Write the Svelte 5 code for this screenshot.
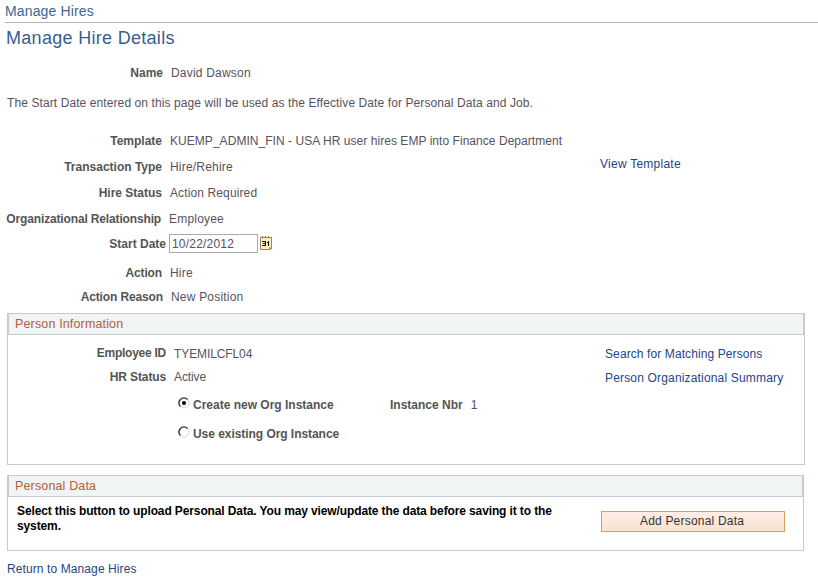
<script lang="ts">
  let startDate = $state('10/22/2012');
  let orgInstance = $state('new');

  const details = [
    { key: 'template', label: 'Template', value: 'KUEMP_ADMIN_FIN - USA HR user hires EMP into Finance Department' },
    { key: 'type', label: 'Transaction Type', value: 'Hire/Rehire' },
    { key: 'status', label: 'Hire Status', value: 'Action Required' },
    { key: 'relation', label: 'Organizational Relationship', value: 'Employee' }
  ];
</script>

{#snippet radioMark(checked: boolean)}
  <svg width="12" height="12" viewBox="0 0 12 12" aria-hidden="true">
    <circle cx="6" cy="6" r="5" fill="#fff" stroke="#d8d8d8" />
    <path d="M2.4 9.6A5 5 0 0 1 9.6 2.4" fill="none" stroke="#333" stroke-width="1.4" />
    {#if checked}<circle cx="6" cy="6" r="2.1" />{/if}
  </svg>
{/snippet}

<main class="page">
  <header class="crumb">Manage Hires</header>
  <h1>Manage Hire Details</h1>

  <div class="row name">
    <span class="label">Name</span>
    <span class="value">David Dawson</span>
  </div>

  <p class="intro">The Start Date entered on this page will be used as the Effective Date for Personal Data and Job.</p>

  <div class="details">
    <div>
      {#each details as item}
        <div class="row {item.key}">
          <span class="label">{item.label}</span>
          <span class="value">{item.value}</span>
        </div>
      {/each}
    </div>
    <a class="view" href="#template">View Template</a>
  </div>

  <div class="row start">
    <label class="label" for="start-date">Start Date</label>
    <input id="start-date" class="date" type="text" bind:value={startDate} />
    <svg class="calendar" width="12" height="14" viewBox="0 0 12 14" shape-rendering="crispEdges" aria-hidden="true">
      <path d="M0 1h12v11l-2 2H0z" fill="#a58a55" />
      <path d="M1 2h10v9H9v2H1z" fill="#fdebc4" />
      <path d="M9 11h2l-2 2z" fill="#d9bd83" />
      <path d="M2 0h1v2H2zM5 0h1v2H5zM8 0h1v2H8z" fill="#8e7440" />
      <path d="M2 5h4v5H2V9h3V8H3V7h2V6H2zM8 5h1v5H8V7H7V6h1z" fill="#111" />
    </svg>
  </div>

  <div class="row action">
    <span class="label">Action</span>
    <span class="value">Hire</span>
  </div>
  <div class="row reason">
    <span class="label">Action Reason</span>
    <span class="value">New Position</span>
  </div>

  <section class="box person">
    <h2>Person Information</h2>
    <div class="person-body">
      <div>
        <div class="row employee">
          <span class="label">Employee ID</span>
          <span class="value">TYEMILCFL04</span>
        </div>
        <div class="row hr">
          <span class="label">HR Status</span>
          <span class="value">Active</span>
        </div>
      </div>
      <nav class="links">
        <a class="search" href="#search">Search for Matching Persons</a>
        <a class="summary" href="#summary">Person Organizational Summary</a>
      </nav>
    </div>
    <div class="choice">
      <label class="radio create">
        <input type="radio" bind:group={orgInstance} value="new" />
        {@render radioMark(orgInstance === 'new')}
        <span>Create new Org Instance</span>
      </label>
      <span class="label nbr">Instance Nbr</span>
      <span class="value">1</span>
    </div>
    <div class="choice">
      <label class="radio existing">
        <input type="radio" bind:group={orgInstance} value="existing" />
        {@render radioMark(orgInstance === 'existing')}
        <span>Use existing Org Instance</span>
      </label>
    </div>
  </section>

  <section class="box personal">
    <h2>Personal Data</h2>
    <div class="personal-body">
      <p>Select this button to upload Personal Data. You may view/update the data before saving it to the<br />system.</p>
      <button type="button">Add Personal Data</button>
    </div>
  </section>

  <a class="return" href="#hires">Return to Manage Hires</a>
</main>

<style>
  :global(body) {
    background: #fff;
  }

  .page {
    box-sizing: border-box;
    width: 818px;
    height: 579px;
    overflow: hidden;
    font: 12px/14px 'Liberation Sans', Arial, sans-serif;
    color: #57525c;
    white-space: nowrap;
  }

  .crumb {
    height: 22px;
    margin-left: 5px;
    border-bottom: 1px solid #b5b5b5;
    font-size: 14px;
    line-height: 22px;
    letter-spacing: 0.15px;
    color: #426597;
  }

  h1 {
    margin: 0 0 0 6px;
    height: 30px;
    font-weight: 400;
    font-size: 18px;
    line-height: 30px;
    letter-spacing: 0.3px;
    color: #365f91;
  }

  h2 {
    box-sizing: border-box;
    margin: 0;
    height: 21px;
    padding-left: 6px;
    border: solid #c5cad0;
    border-width: 0 1px 1px;
    background: #f0f4f5;
    font-weight: 400;
    font-size: 12.5px;
    line-height: 20px;
    letter-spacing: 0.15px;
    color: #b25f38;
  }

  a {
    color: #1f4488;
    text-decoration: none;
    letter-spacing: 0.1px;
  }

  .row {
    display: flex;
    align-items: center;
    height: 26px;
  }

  .label {
    width: 162px;
    margin-right: 8px;
    text-align: right;
    font-weight: 700;
    color: #545454;
  }

  .value {
    letter-spacing: 0.2px;
  }

  .name {
    height: 40px;
  }

  .name .label,
  .reason .label {
    width: 163px;
  }

  .template .value {
    letter-spacing: 0.045px;
  }

  .status .value {
    letter-spacing: 0.12px;
  }

  .relation .label {
    width: 161px;
    letter-spacing: -0.15px;
  }

  .intro {
    margin: 0 0 0 7px;
    height: 35px;
    line-height: 20px;
    letter-spacing: 0.095px;
  }

  .details {
    display: grid;
    grid-template-columns: 600px auto;
    height: 104px;
  }

  .view {
    padding-top: 29px;
    letter-spacing: 0.25px;
  }

  .start {
    box-sizing: border-box;
    height: 27px;
    padding-bottom: 3px;
  }

  .start .label {
    width: 166px;
    margin-right: 3px;
  }

  .date {
    box-sizing: border-box;
    width: 89px;
    height: 19px;
    margin: -2px 2px 0 0;
    padding: 1px 2px 0;
    border: 1px solid #aaa;
    font: inherit;
    letter-spacing: 0.2px;
    color: inherit;
  }

  .calendar {
    margin-top: -2px;
  }

  .action {
    height: 27px;
  }

  .action .label,
  .reason .label,
  .hr .label {
    letter-spacing: -0.13px;
  }

  .reason {
    height: 22px;
    margin-bottom: 5px;
  }

  .box {
    box-sizing: border-box;
    margin-left: 7px;
    border: 1px solid #c5cad0;
  }

  .person {
    width: 798px;
    height: 152px;
  }

  .person-body {
    display: grid;
    grid-template-columns: 597px auto;
    padding-top: 6px;
    height: 49px;
  }

  .person-body .row {
    height: 24px;
  }

  .person-body .label {
    width: 158px;
  }

  .employee .label {
    letter-spacing: -0.25px;
  }

  .employee .value {
    padding-top: 1px;
  }

  .hr .label {
    padding-bottom: 1px;
  }

  .person-body .value {
    letter-spacing: -0.1px;
  }

  .links {
    display: flex;
    flex-direction: column;
    gap: 10px;
    padding-top: 6px;
  }

  .summary {
    letter-spacing: 0.17px;
  }

  .choice {
    display: flex;
    align-items: center;
    height: 29px;
    padding-left: 170px;
  }

  .radio {
    display: flex;
    align-items: center;
    width: 212px;
    font-weight: 700;
    color: #545454;
  }

  .radio svg {
    margin: -4px 3px 0 0;
  }

  .radio input {
    appearance: none;
    width: 0;
    height: 0;
    margin: 0;
  }

  .existing {
    letter-spacing: -0.05px;
  }

  .nbr {
    width: auto;
  }

  .personal {
    width: 797px;
    height: 76px;
    margin-top: 10px;
  }

  .personal-body {
    display: flex;
    justify-content: space-between;
    padding: 7px 18px 0 9px;
  }

  .personal-body p {
    margin: 0;
    font-weight: 700;
    line-height: 15px;
    letter-spacing: -0.12px;
    color: #000;
  }

  button {
    width: 184px;
    height: 21px;
    margin-top: 7px;
    padding: 0 2px 2px 0;
    border: 1px solid #d9a066;
    background: linear-gradient(#fdeee6, #fae3cf);
    font: inherit;
    line-height: 16px;
    letter-spacing: 0.2px;
    color: #333;
  }

  .return {
    display: block;
    margin: 11px 0 0 7px;
  }
</style>
